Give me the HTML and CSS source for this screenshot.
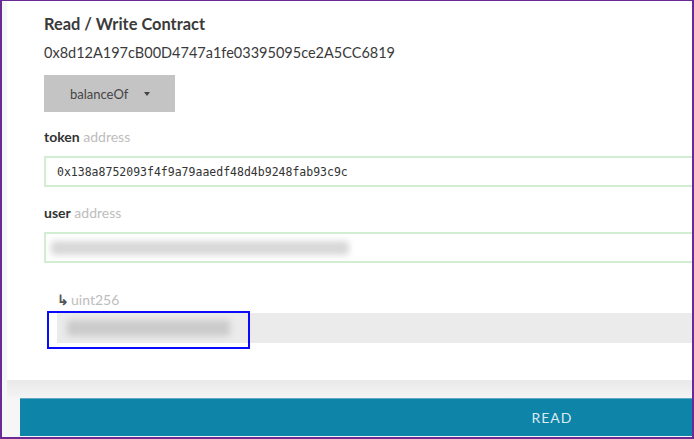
FILE: index.html
```html
<!DOCTYPE html>
<html>
<head>
<meta charset="utf-8">
<link rel="stylesheet" href="styles.css">
</head>
<body>
<div class="frame">
  <div class="card">
    <div class="title">Read / Write Contract</div>
    <div class="addr">0x8d12A197cB00D4747a1fe03395095ce2A5CC6819</div>
    <div class="select">balanceOf <span class="caret"></span></div>
    <div class="label"><b>token</b> <span class="type">address</span></div>
    <div class="input"><span class="mono">0x138a8752093f4f9a79aaedf48d4b9248fab93c9c</span></div>
    <div class="label"><b>user</b> <span class="type">address</span></div>
    <div class="input"><div class="blur blur-user"></div></div>
    <div class="outlabel"><b class="arrow">↳</b><span class="type">uint256</span></div>
    <div class="output">
      <div class="blur blur-out"></div>
      <div class="highlight"></div>
    </div>
  </div>
  <div class="shade"></div>
  <div class="read">READ</div>
</div>
</body>
</html>
```
FILE: styles.css
```css
html, body { margin: 0; padding: 0; background: #fff; }
.frame {
  width: 694px; height: 439px; box-sizing: border-box;
  border-style: solid; border-color: #6a2a96;
  border-width: 1px 2px 2px 2px;
  background: #f6f6f6; overflow: hidden;
  font-family: Lato, "Liberation Sans", sans-serif; color: #333;
}
.card {
  margin-left: 5px; width: 1000px; background: #fff;
  padding: 13px 0 37px 37px; box-sizing: border-box;
}
.title { font-weight: 700; font-size: 16.4px; line-height: 20px; color: #3a3a3a; }
.addr { margin-top: 9px; font-size: 14.5px; line-height: 20px; color: #3a3a3a; }
.select {
  margin-top: 12px; width: 131px; height: 37px; background: #c4c4c4;
  display: flex; align-items: center; padding-left: 26px; box-sizing: border-box;
  font-size: 13px; color: #444; gap: 8px;
}
.caret {
  width: 0; height: 0; border-left: 3px solid transparent; border-right: 3px solid transparent;
  border-top: 4px solid #444; margin-left: 8px;
}
.label { margin-top: 15px; font-size: 14px; line-height: 20px; }
.label b { color: #333; }
.type { color: #bdbdbd; }
.label + .input { margin-top: 9px; }
.input + .label { margin-top: 16px; }
.input {
  height: 31px; box-sizing: border-box; border: 2px solid #d3edd3;
  display: flex; align-items: center; padding-left: 11px; background: #fff;
}
.mono { font-family: "DejaVu Sans Mono", monospace; font-size: 11.5px; color: #333; }
.blur { background: #cfcfcf; filter: blur(3px); border-radius: 3px; }
.blur-user { width: 298px; height: 14px; margin-left: -6px; background: #d8d8d8; }
.outlabel { margin-top: 27px; margin-left: 13px; font-size: 14px; line-height: 20px; }
.arrow { color: #555; font-weight: 700; margin-right: 2px; }
.output {
  position: relative; margin-top: 3px; margin-left: 13px; height: 30px;
  background: #ebebeb; display: flex; align-items: center; padding-left: 10px;
}
.blur-out { width: 163px; height: 16px; background: #cbcbcb; }
.highlight {
  position: absolute; left: -10px; top: -2px; width: 203px; height: 38px;
  box-sizing: border-box; border: 2px solid #0a0aff;
}
.shade { height: 18px; background: linear-gradient(#e9e9e9, #f4f4f4); margin-left: 5px; }
.read {
  margin-left: 18px; width: 1064px; height: 38px; background: #0e84a8;
  border-top: 1px solid #5fa9c2; box-sizing: border-box;
  display: flex; align-items: center; justify-content: center;
  color: #dbeaf0; font-size: 14px; font-weight: 400; letter-spacing: 1px;
}
```
